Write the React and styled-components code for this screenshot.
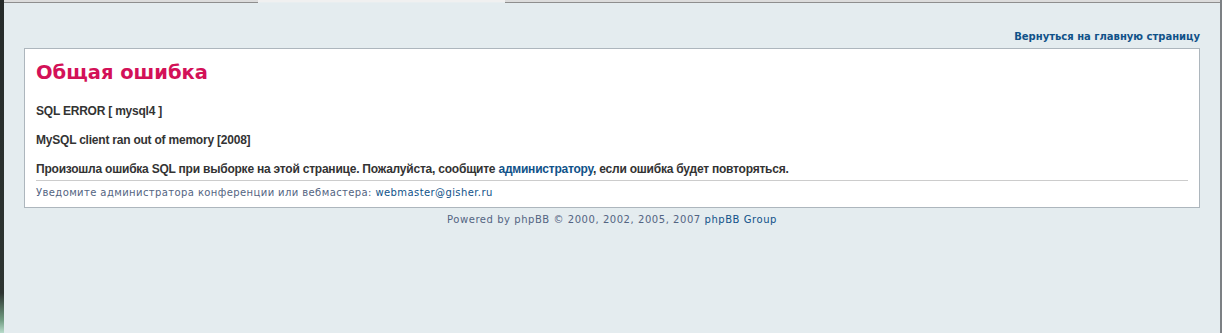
import React from "react";
import styled, { createGlobalStyle } from "styled-components";

const GlobalStyle = createGlobalStyle`
  html, body {
    margin: 0;
    padding: 0;
    height: 100%;
    overflow: hidden;
  }
  body {
    background: #e4ecef;
    font-family: "DejaVu Sans", Verdana, sans-serif;
  }
`;

const Screen = styled.div`
  display: flex;
  width: 1222px;
  height: 333px;
`;

const LeftFrame = styled.div`
  width: 4px;
  background: linear-gradient(to bottom, #262b2a 0%, #2d3431 88%, #6f9a80 96%, #b8dccb 100%);
`;

const RightFrame = styled.div`
  width: 2px;
  background: #7c8084;
`;

const Main = styled.div`
  flex: 1;
  display: flex;
  flex-direction: column;
`;

const TabStrip = styled.div`
  display: flex;
  height: 3px;
`;

const Tab = styled.div`
  width: ${(p) => p.$w}px;
  flex: ${(p) => (p.$w ? "none" : 1)};
  background: ${(p) => (p.$active ? "#f0f0f0" : "#dcdcdc")};
  border-bottom: 1px solid ${(p) => (p.$active ? "#e8eef0" : "#8e8e8e")};
`;

const Page = styled.div`
  padding: 26px 20px 0 20px;
`;

const TopLinks = styled.div`
  display: flex;
  justify-content: flex-end;
  height: 19px;
  align-items: flex-start;
`;

const NavLink = styled.a`
  color: #105289;
  font-weight: bold;
  font-size: 10px;
  line-height: 13px;
  padding-top: 1px;
  text-decoration: none;
`;

const Panel = styled.div`
  background: #fff;
  border: 1px solid #adb6bd;
  padding: 11px 11px 8px 11px;
`;

const Title = styled.h2`
  margin: 0 0 18px 0;
  font-family: "DejaVu Sans", Verdana, sans-serif;
  font-size: 19.5px;
  font-weight: bold;
  color: #d31158;
  line-height: 26px;
`;

const Para = styled.p`
  margin: 0 0 14px 0;
  font-family: "Liberation Sans", Arial, sans-serif;
  font-weight: bold;
  font-size: 12px;
  letter-spacing: -0.22px;
  line-height: 15px;
  color: #333;
`;

const Blue = styled.a`
  color: #105289;
  text-decoration: none;
`;

const Divider = styled.hr`
  border: 0;
  border-top: 1px solid #cccccc;
  margin: -11px 0 5px 0;
`;

const Small = styled.div`
  font-size: 10px;
  letter-spacing: 0.4px;
  line-height: 13px;
  color: #536482;
`;

const Copyright = styled.div`
  text-align: center;
  font-size: 10px;
  letter-spacing: 0.55px;
  line-height: 13px;
  color: #536482;
  padding-top: 5px;
`;

export default function App() {
  return (
    <>
      <GlobalStyle />
      <Screen>
        <LeftFrame />
        <Main>
          <TabStrip>
            <Tab $w={254} />
            <Tab $w={247} $active />
            <Tab />
          </TabStrip>
          <Page>
            <TopLinks>
              <NavLink href="#">Вернуться на главную страницу</NavLink>
            </TopLinks>
            <Panel>
              <Title>Общая ошибка</Title>
              <Para>SQL ERROR [ mysql4 ]</Para>
              <Para>MySQL client ran out of memory [2008]</Para>
              <Para>
                Произошла ошибка SQL при выборке на этой странице. Пожалуйста, сообщите{" "}
                <Blue href="#">администратору</Blue>, если ошибка будет повторяться.
              </Para>
              <Divider />
              <Small>
                Уведомите администратора конференции или вебмастера:{" "}
                <Blue href="#">webmaster@gisher.ru</Blue>
              </Small>
            </Panel>
            <Copyright>
              Powered by phpBB © 2000, 2002, 2005, 2007 <Blue href="#">phpBB Group</Blue>
            </Copyright>
          </Page>
        </Main>
        <RightFrame />
      </Screen>
    </>
  );
}
